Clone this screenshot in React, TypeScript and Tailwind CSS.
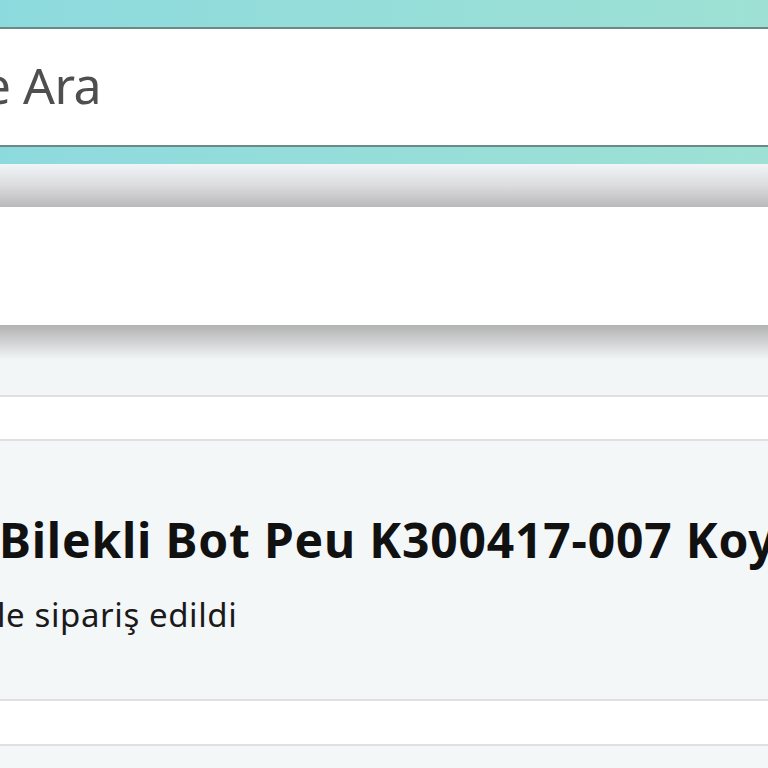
export default function App() {
  return (
    <div className="flex h-[768px] w-[768px] flex-col overflow-hidden bg-[#f3f6f7] font-['Noto_Sans','Open_Sans',sans-serif]">
      {/* header with search */}
      <header className="bg-gradient-to-r from-[#8ddade] to-[#9ee1d4] pt-[27px] pb-[17px]">
        <div className="flex h-[120px] items-center border-y-2 border-[#6a8988] bg-white pb-[4px]">
          <span className="-ml-[42px] whitespace-nowrap text-[50px] font-normal leading-none tracking-[-0.5px] text-[#4f4f4f]">
            ile Ara
          </span>
        </div>
      </header>

      {/* band under header */}
      <div className="h-[43px] bg-gradient-to-b from-[#f1f5f8] via-[#dcdcde] to-[#b9b9bc]" />

      {/* dropdown panel */}
      <div className="h-[118px] bg-white" />

      {/* shadow over list */}
      <div className="h-[35px] bg-gradient-to-b from-[#b2b2b2] to-[#f3f6f7]" />
      <div className="h-[35px] bg-[#f3f6f7]" />

      <div className="h-[46px] border-y-2 border-[#e0e0e2] bg-white" />

      {/* order card */}
      <div className="flex h-[258px] flex-col justify-center bg-[#f4f7f8] pt-[6px]">
        <p className="-ml-[1px] whitespace-nowrap text-[48px] font-bold leading-none tracking-[0.8px] text-[#111]">
          Bilekli Bot Peu K300417-007 Koyu
        </p>
        <p className="mt-[34px] -ml-[3px] whitespace-nowrap text-[33px] leading-none tracking-[0.6px] text-[#1a1a1a]">
          le sipariş edildi
        </p>
      </div>

      <div className="h-[47px] border-y-2 border-[#e0e0e2] bg-white" />
      <div className="flex-1 bg-[#f4f7f8]" />
    </div>
  );
}
